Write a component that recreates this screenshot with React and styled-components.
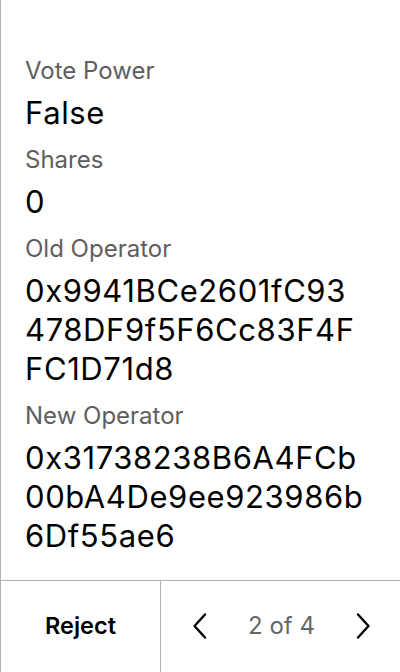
import React from "react";
import styled, { createGlobalStyle } from "styled-components";

const GlobalStyle = createGlobalStyle`
  *, *::before, *::after {
    box-sizing: border-box;
  }
  html, body {
    margin: 0;
    padding: 0;
    background: #ffffff;
  }
  body {
    font-family: Inter, "Noto Sans", sans-serif;
    -webkit-font-smoothing: antialiased;
  }
`;

const Screen = styled.div`
  width: 400px;
  height: 672px;
  border-left: 1px solid #b3b3b3;
  display: flex;
  flex-direction: column;
  background: #ffffff;
`;

const Details = styled.div`
  flex: 1;
  padding: 55px 24px 0 24px;
  display: flex;
  flex-direction: column;
  gap: 12px;
`;

const Field = styled.div`
  display: flex;
  flex-direction: column;
`;

const Label = styled.div`
  font-size: 24px;
  line-height: 32px;
  margin-bottom: 6px;
  color: #5e5e5e;
`;

const Value = styled.div`
  font-size: 31px;
  line-height: 39px;
  letter-spacing: 0.6px;
  color: #000000;
  word-break: break-all;
  max-width: 340px;
`;

const Footer = styled.div`
  height: 92px;
  border-top: 1px solid #b3b3b3;
  display: flex;
`;

const RejectButton = styled.button`
  width: 160px;
  border: none;
  border-right: 1px solid #b3b3b3;
  background: transparent;
  font-family: Inter, "Noto Sans", sans-serif;
  font-size: 23.5px;
  font-weight: 600;
  color: #000000;
  padding: 0 0 2px 0;
  cursor: pointer;
`;

const Pager = styled.div`
  flex: 1;
  display: flex;
  align-items: center;
  justify-content: space-between;
  padding: 0 28px 2px 30px;
`;

const ArrowButton = styled.button`
  border: none;
  background: transparent;
  padding: 0;
  display: flex;
  align-items: center;
  cursor: pointer;
`;

const PageText = styled.span`
  font-size: 24px;
  color: #666666;
`;

const Chevron = ({ dir }) => (
  <svg width="20" height="28" viewBox="0 0 20 28" fill="none">
    <path
      d={dir === "left" ? "M14 2.5 L3.5 14 L14 25.5" : "M6 2.5 L16.5 14 L6 25.5"}
      stroke="#000"
      strokeWidth="2.4"
      strokeLinecap="round"
      strokeLinejoin="round"
    />
  </svg>
);

const fields = [
  { label: "Vote Power", value: "False" },
  { label: "Shares", value: "0" },
  { label: "Old Operator", value: "0x9941BCe2601fC93478DF9f5F6Cc83F4FFC1D71d8" },
  { label: "New Operator", value: "0x31738238B6A4FCb00bA4De9ee923986b6Df55ae6" },
];

export default function App() {
  return (
    <>
      <GlobalStyle />
      <Screen>
        <Details>
          {fields.map((f) => (
            <Field key={f.label}>
              <Label>{f.label}</Label>
              <Value>{f.value}</Value>
            </Field>
          ))}
        </Details>
        <Footer>
          <RejectButton>Reject</RejectButton>
          <Pager>
            <ArrowButton>
              <Chevron dir="left" />
            </ArrowButton>
            <PageText>2 of 4</PageText>
            <ArrowButton>
              <Chevron dir="right" />
            </ArrowButton>
          </Pager>
        </Footer>
      </Screen>
    </>
  );
}
